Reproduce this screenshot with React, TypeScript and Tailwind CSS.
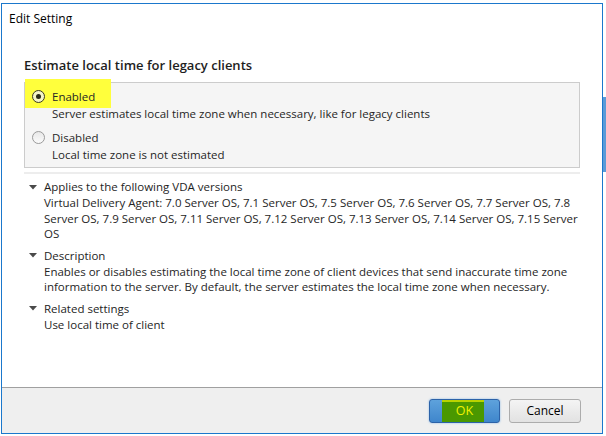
import React from 'react';

const Radio: React.FC<{ checked?: boolean }> = ({ checked }) => (
  <span
    className={`relative flex h-[13px] w-[13px] shrink-0 items-center justify-center rounded-full border ${
      checked ? 'border-[#3a3a20] bg-[#f4f4c8]' : 'border-[#9a9a9a] bg-gradient-to-b from-[#e8e8e8] to-[#fbfbfb]'
    }`}
  >
    {checked && <span className="h-[5px] w-[5px] rounded-full bg-[#2a2a1a]" />}
  </span>
);

const Caret: React.FC = () => (
  <svg width="8" height="5" viewBox="0 0 8 5" className="shrink-0">
    <path d="M0 0 L8 0 L4 4.5 Z" fill="#4a4a4a" />
  </svg>
);

const Section: React.FC<{ title: string; children: React.ReactNode; first?: boolean }> = ({ title, children, first }) => (
  <div className={first ? '' : 'mt-[6px]'}>
    <div className="flex h-[16px] items-center">
      <span className="ml-[5px] w-[15px]">
        <Caret />
      </span>
      <span className="text-[#1e1e1e]">{title}</span>
    </div>
    <div className="pl-[20px] leading-[15.5px] text-[#262626]">{children}</div>
  </div>
);

const App: React.FC = () => {
  return (
    <div className="relative h-[436px] w-[606px] overflow-hidden bg-white font-['Open_Sans',_'Noto_Sans',_sans-serif] text-[11.5px] leading-[16px]">
      {/* desktop behind the dialog */}
      <div className="absolute right-0 top-[97px] h-[75px] w-[3px] bg-[#5a9bd8]" />

      <div className="ml-px mt-[3px] flex h-[431px] w-[602px] flex-col border border-[#1b78cc] bg-white">
        <div className="h-[31px] pl-[7px] pt-[7px] text-[12px] text-black">Edit Setting</div>

        <div className="flex-1 px-[22px]">
          <div className="mt-[22px] text-[13px] font-semibold text-[#1e1e1e]">Estimate local time for legacy clients</div>

          <div className="relative mt-[9px] h-[86px] border border-[#cccccc] bg-[#f5f5f5] text-[#262626]">
            <span className="absolute left-0 top-[-4px] h-[29px] w-[86px] bg-[#ffff3c]" />
            <div className="relative pt-[5px]">
              <div className="flex h-[17px] items-center leading-[17px]">
                <span className="ml-[7px] w-[20px]">
                  <Radio checked />
                </span>
                <span>Enabled</span>
              </div>
              <div className="h-[17px] pl-[27px] leading-[17px]">
                Server estimates local time zone when necessary, like for legacy clients
              </div>
              <div className="mt-[7px] flex h-[17px] items-center leading-[17px]">
                <span className="ml-[7px] w-[20px]">
                  <Radio />
                </span>
                <span>Disabled</span>
              </div>
              <div className="h-[17px] pl-[27px] leading-[17px]">Local time zone is not estimated</div>
            </div>
          </div>

          <div className="mt-[4px] h-[2px] bg-[#ededed]" />

          <div className="mt-[5px]">
            <Section title="Applies to the following VDA versions" first>
              Virtual Delivery Agent: 7.0 Server OS, 7.1 Server OS, 7.5 Server OS, 7.6 Server OS, 7.7 Server OS, 7.8
              Server OS, 7.9 Server OS, 7.11 Server OS, 7.12 Server OS, 7.13 Server OS, 7.14 Server OS, 7.15 Server
              OS
            </Section>
            <Section title="Description">
              Enables or disables estimating the local time zone of client devices that send inaccurate time zone
              information to the server. By default, the server estimates the local time zone when necessary.
            </Section>
            <Section title="Related settings">Use local time of client</Section>
          </div>
        </div>

        <div className="flex h-[46px] items-center justify-end gap-[9px] border-t border-[#a0a0a0] bg-[#efefef] pr-[21px]">
          <button className="relative flex h-[24px] w-[71px] items-center justify-center rounded-[3px] border border-[#2c62a8] bg-gradient-to-b from-[#5ea2dc] to-[#3f86cc] shadow-[0_0_2px_#7fb2e5]">
            <span className="absolute bottom-0 left-[12px] top-0 w-[42px] border-t-2 border-[#b9d300] bg-[#4a9800]" />
            <span className="relative text-[12.5px] text-[#f2f200]">OK</span>
          </button>
          <button className="flex h-[24px] w-[72px] items-center justify-center rounded-[3px] border border-[#acacac] bg-gradient-to-b from-[#f4f4f4] to-[#e2e2e2] text-[12px] text-black">
            Cancel
          </button>
        </div>
      </div>
    </div>
  );
};

export default App;
